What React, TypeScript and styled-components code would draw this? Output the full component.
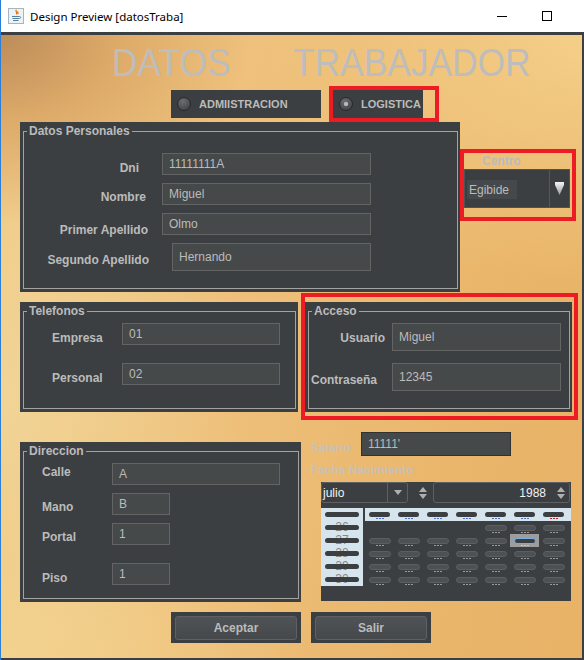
import React from "react";
import styled, { createGlobalStyle } from "styled-components";

const GlobalStyle = createGlobalStyle`
  *, *::before, *::after { box-sizing: border-box; }
  html, body { margin: 0; padding: 0; background: #ffffff; }
  body { font-family: "Liberation Sans", Arial, sans-serif; }
`;

const Window = styled.div`
  width: 584px;
  height: 660px;
  display: flex;
  flex-direction: column;
  border-left: 1px solid #2b7fd6;
  background: #ffffff;
  overflow: hidden;
`;

const TitleBar = styled.div`
  height: 32px;
  flex: none;
  display: flex;
  align-items: center;
  padding: 0 15px 0 7px;
  background: #ffffff;
`;

const TitleText = styled.span`
  margin-left: 6px;
  font-family: "Noto Sans", "Liberation Sans", sans-serif;
  font-size: 11.5px;
  color: #000000;
`;

const Controls = styled.div`
  margin-left: auto;
  display: flex;
`;

const ControlButton = styled.div`
  width: 45px;
  height: 32px;
  display: flex;
  align-items: center;
  justify-content: center;
`;

const MinGlyph = styled.span`
  width: 10px;
  height: 1px;
  background: #000000;
`;

const MaxGlyph = styled.span`
  width: 10px;
  height: 10px;
  border: 1px solid #000000;
`;

const Frame = styled.div`
  flex: 1;
  display: flex;
  padding: 3px 2px 2px 0;
  background: #3c3f41;
`;

const Content = styled.div`
  flex: 1;
  display: flex;
  flex-direction: column;
  background:
    radial-gradient(ellipse 250px 190px at 0px 0px, rgba(188, 140, 90, 1) 0%, rgba(215, 160, 96, 0.75) 45%, rgba(228, 172, 98, 0) 100%),
    radial-gradient(ellipse 320px 250px at 100% 0%, rgba(245, 208, 138, 0.95) 0%, rgba(245, 208, 138, 0) 100%),
    radial-gradient(ellipse 240px 380px at 0% 58%, rgba(241, 213, 152, 0.95) 0%, rgba(241, 213, 152, 0) 100%),
    radial-gradient(ellipse 300px 140px at 0% 100%, rgba(243, 210, 140, 0.9) 0%, rgba(243, 210, 140, 0) 100%),
    linear-gradient(100deg, #f0c782 0%, #eec07b 40%, #e9b56a 80%, #e8b367 100%);
`;

const TitleRow = styled.div`
  flex: none;
  display: flex;
  height: 39px;
  margin-top: 8px;
  padding-left: 111px;
`;

const TitleWord = styled.span<{ $ml?: number }>`
  display: inline-block;
  font-size: 39px;
  line-height: 39px;
  color: #bdbdbd;
  white-space: nowrap;
  transform: scaleX(0.906);
  transform-origin: 0 50%;
  margin-left: ${(p) => p.$ml ?? 0}px;
`;

const Band = styled.div<{ $mt?: number; $h: number }>`
  flex: none;
  display: flex;
  align-items: flex-start;
  height: ${(p) => p.$h}px;
  margin-top: ${(p) => p.$mt ?? 0}px;
`;

const Marker = styled.div<{ $w: number; $h: number; $ml?: number; $mt?: number }>`
  flex: none;
  display: flex;
  flex-direction: column;
  align-items: flex-start;
  width: ${(p) => p.$w}px;
  height: ${(p) => p.$h}px;
  margin-left: ${(p) => p.$ml ?? 0}px;
  margin-top: ${(p) => p.$mt ?? 0}px;
  border: 4px solid #ed1c24;
`;

const RadioBox = styled.label<{ $w: number; $ml?: number; $mt?: number }>`
  flex: none;
  display: flex;
  align-items: center;
  gap: 8px;
  width: ${(p) => p.$w}px;
  height: 28px;
  margin-left: ${(p) => p.$ml ?? 0}px;
  margin-top: ${(p) => p.$mt ?? 0}px;
  padding-left: 6px;
  background: #3c3f41;
  font-size: 11px;
  font-weight: bold;
  color: #bbbbbb;
  white-space: nowrap;
`;

const RadioDot = styled.span<{ $checked?: boolean }>`
  flex: none;
  width: 14px;
  height: 14px;
  border-radius: 50%;
  border: 1px solid #26282a;
  background: ${(p) =>
    p.$checked
      ? "radial-gradient(circle, #b8b8b8 0 1.8px, rgba(0,0,0,0) 2.4px), radial-gradient(circle at 40% 30%, #6a6e71 0%, #3a3d3f 100%)"
      : "radial-gradient(circle at 40% 30%, #6a6e71 0%, #3a3d3f 100%)"};
`;

const Panel = styled.div<{ $w: number; $h: number; $ml?: number; $mt?: number }>`
  flex: none;
  display: flex;
  width: ${(p) => p.$w}px;
  height: ${(p) => p.$h}px;
  margin-left: ${(p) => p.$ml ?? 0}px;
  margin-top: ${(p) => p.$mt ?? 0}px;
  padding: 2px 2px 3px 3px;
  background: #3c3f41;
`;

const Group = styled.fieldset`
  flex: 1;
  min-width: 0;
  margin: 0;
  padding: 0;
  border: 1px solid #a3a3a3;
`;

const Legend = styled.legend`
  margin-left: 3px;
  padding: 0 2px;
  font-size: 12px;
  line-height: 14px;
  font-weight: bold;
  color: #bbbbbb;
`;

const Field = styled.div<{ $mt: number; $h: number }>`
  display: flex;
  align-items: flex-start;
  height: ${(p) => p.$h}px;
  margin-top: ${(p) => p.$mt}px;
`;

const FieldLabel = styled.label<{ $w: number; $dy: number; $ml?: number; $right?: boolean; $onBg?: boolean }>`
  flex: none;
  width: ${(p) => p.$w}px;
  margin-top: ${(p) => p.$dy}px;
  margin-left: ${(p) => p.$ml ?? 0}px;
  text-align: ${(p) => (p.$right ? "right" : "left")};
  font-size: 12px;
  line-height: 14px;
  font-weight: bold;
  color: ${(p) => (p.$onBg ? "#c9c0b6" : "#bbbbbb")};
  white-space: nowrap;
`;

const TextBox = styled.input<{ $w: number; $ml?: number; $dark?: boolean }>`
  flex: none;
  width: ${(p) => p.$w}px;
  height: 100%;
  margin: 0 0 0 ${(p) => p.$ml ?? 0}px;
  padding: 0 6px;
  border: 1px solid ${(p) => (p.$dark ? "#2f3133" : "#646464")};
  background: #45494a;
  color: #bbbbbb;
  font-family: "Liberation Sans", Arial, sans-serif;
  font-size: 12px;
  outline: none;
`;

const CentroLabel = styled.span`
  margin: 1px 0 0 18px;
  font-size: 12px;
  line-height: 14px;
  font-weight: bold;
  color: #b9bcc0;
`;

const Combo = styled.div`
  display: flex;
  align-items: center;
  width: 106px;
  height: 39px;
  margin-top: 1px;
  background: #3c3f41;
  border: 1px solid #505356;
`;

const ComboValue = styled.span`
  display: flex;
  align-items: center;
  width: 50px;
  height: 19px;
  margin: 2px 0 0 2px;
  padding-left: 2px;
  background: #46494b;
  font-size: 12px;
  color: #bbbbbb;
`;

const ComboButton = styled.span`
  display: flex;
  align-items: center;
  justify-content: center;
  width: 20px;
  height: 100%;
  margin-left: auto;
  border-left: 1px solid #55585b;
`;

const SideColumn = styled.div`
  flex: none;
  display: flex;
  flex-direction: column;
  margin: 12px 0 0 10px;
`;

const OuterLabel = styled.span<{ $mt?: number }>`
  margin-top: ${(p) => p.$mt ?? 0}px;
  font-size: 12px;
  line-height: 14px;
  font-weight: bold;
  color: #c9c0b6;
  white-space: nowrap;
`;

const Calendar = styled.div`
  flex: none;
  display: flex;
  flex-direction: column;
  width: 250px;
  height: 119px;
  margin: 5px 0 0 10px;
  background: #3c3f41;
`;

const CalTop = styled.div`
  display: flex;
  align-items: stretch;
  height: 21px;
`;

const MonthCombo = styled.div`
  flex: none;
  display: flex;
  width: 87px;
  border: 1px solid #5e6163;
  border-radius: 3px;
`;

const MonthText = styled.span`
  flex: 1;
  display: flex;
  align-items: center;
  padding-left: 1px;
  font-size: 12px;
  color: #f2f2f2;
`;

const MonthArrow = styled.span`
  flex: none;
  display: flex;
  align-items: center;
  justify-content: center;
  width: 20px;
  border-left: 1px solid #5e6163;
`;

const Spinner = styled.span<{ $ml: number }>`
  flex: none;
  display: flex;
  flex-direction: column;
  align-items: center;
  justify-content: center;
  gap: 2px;
  width: 9px;
  margin-left: ${(p) => p.$ml}px;
`;

const YearField = styled.div`
  flex: none;
  display: flex;
  align-items: center;
  justify-content: flex-end;
  width: 137px;
  margin-left: 6px;
  padding-right: 4px;
  border: 1px solid #5e6163;
  border-radius: 3px;
`;

const YearText = styled.span`
  font-size: 12px;
  color: #f2f2f2;
`;

const CalBody = styled.div`
  display: flex;
  align-items: flex-start;
  margin-top: 5px;
`;

const WeekColumn = styled.div`
  flex: none;
  display: flex;
  flex-direction: column;
  width: 42px;
  background: #d6e4ee;
`;

const WeekCell = styled.div`
  position: relative;
  height: 13px;
  text-align: center;
  font-size: 12px;
  line-height: 13px;
  color: #8d877d;
`;

const WeekPill = styled.span`
  position: absolute;
  left: 4px;
  top: 4px;
  width: 34px;
  height: 5px;
  border-radius: 3px;
  background: #3c3f41;
`;

const DayArea = styled.div`
  flex: none;
  display: flex;
  flex-direction: column;
  width: 206px;
  margin-left: 2px;
`;

const DayGrid = styled.div<{ $header?: boolean }>`
  display: grid;
  grid-template-columns: repeat(7, 29px);
  grid-auto-rows: 13px;
  background: ${(p) => (p.$header ? "#d6e4ee" : "transparent")};
`;

const DayCell = styled.div<{ $selected?: boolean }>`
  display: flex;
  flex-direction: column;
  align-items: flex-start;
  padding: 4px 0 0 4px;
  background: ${(p) => (p.$selected ? "#9d9d9d" : "transparent")};
`;

const Pill = styled.span<{ $kind: "head" | "day" | "sel" }>`
  width: ${(p) => (p.$kind === "head" ? 21 : 22)}px;
  height: ${(p) => (p.$kind === "head" ? 5 : 6)}px;
  border-radius: 3px;
  background: ${(p) => (p.$kind === "day" ? "#4e5153" : "#3c3f41")};
  border: ${(p) =>
    p.$kind === "day" ? "1px solid #5c5f62" : p.$kind === "sel" ? "1px solid #7aaee2" : "none"};
`;

const Dots = styled.span<{ $color: string }>`
  width: 8px;
  height: 1px;
  margin: 1px 0 0 7px;
  background: repeating-linear-gradient(90deg, ${(p) => p.$color} 0 2px, transparent 2px 3px);
`;

const ButtonFrame = styled.div<{ $w: number; $ml: number }>`
  flex: none;
  display: flex;
  width: ${(p) => p.$w}px;
  height: 31px;
  margin-left: ${(p) => p.$ml}px;
  padding: 4px 4px 3px 4px;
  background: #3c3f41;
`;

const Button = styled.button`
  flex: 1;
  padding: 0;
  border: 1px solid #5e6163;
  border-radius: 3px;
  background: linear-gradient(#4f5355, #46494b);
  color: #bbbbbb;
  font-family: "Liberation Sans", Arial, sans-serif;
  font-size: 12px;
  font-weight: bold;
`;

const JavaIcon = () => (
  <svg width="16" height="16" viewBox="0 0 16 16">
    <rect x="0.5" y="0.5" width="15" height="15" fill="#eef2f6" stroke="#a8b4c0" />
    <path d="M8.5 1.8c-2 1.6 1.6 2.4-0.2 4.6M10 3.4c-1 0.9 0.8 1.3-0.2 2.6" stroke="#e76f00" strokeWidth="1.2" fill="none" />
    <path d="M4 8.5h7.5M4.5 10.5h6.5M5 12.5h5.5" stroke="#5382a1" strokeWidth="1.1" fill="none" />
    <path d="M11.5 8.5c1.6 0 1.6 2-0.3 2" stroke="#5382a1" strokeWidth="1" fill="none" />
  </svg>
);

const SmallArrow = ({ up = false, color = "#b0b0b0" }: { up?: boolean; color?: string }) => (
  <svg width="8" height="5" viewBox="0 0 8 5">
    <polygon points={up ? "0,5 8,5 4,0" : "0,0 8,0 4,5"} fill={color} />
  </svg>
);

const BigArrow = () => (
  <svg width="9" height="13" viewBox="0 0 9 13">
    <defs>
      <linearGradient id="ga" x1="0" y1="0" x2="0" y2="1">
        <stop offset="0" stopColor="#f4f4f4" />
        <stop offset="1" stopColor="#9a9a9a" />
      </linearGradient>
    </defs>
    <polygon points="0,0 9,0 9,3 4.5,13 0,3" fill="url(#ga)" />
  </svg>
);

const days: { row: number; col: number }[] = [];
for (let r = 0; r < 5; r++) {
  for (let c = 0; c < 7; c++) {
    if (r === 0 && c < 4) continue;
    days.push({ row: r, col: c });
  }
}

export default function App() {
  return (
    <>
      <GlobalStyle />
      <Window>
        <TitleBar>
          <JavaIcon />
          <TitleText>Design Preview [datosTraba]</TitleText>
          <Controls>
            <ControlButton>
              <MinGlyph />
            </ControlButton>
            <ControlButton>
              <MaxGlyph />
            </ControlButton>
          </Controls>
        </TitleBar>
        <Frame>
          <Content>
            <TitleRow>
              <TitleWord>DATOS</TitleWord>
              <TitleWord $ml={50}>TRABAJADOR</TitleWord>
            </TitleRow>

            <Band $mt={4} $h={36}>
              <RadioBox $w={150} $ml={170} $mt={4}>
                <RadioDot />
                ADMIISTRACION
              </RadioBox>
              <Marker $w={110} $h={36} $ml={8}>
                <RadioBox $w={90}>
                  <RadioDot $checked />
                  LOGISTICA
                </RadioBox>
              </Marker>
            </Band>

            <Band $h={170}>
              <Panel $w={440} $h={170} $ml={19}>
                <Group>
                  <Legend>Datos Personales</Legend>
                  <Field $mt={15} $h={22}>
                    <FieldLabel $w={115} $dy={8} $right>Dni</FieldLabel>
                    <TextBox $w={209} $ml={23} readOnly value="11111111A" />
                  </Field>
                  <Field $mt={8} $h={22}>
                    <FieldLabel $w={122} $dy={7} $right>Nombre</FieldLabel>
                    <TextBox $w={209} $ml={16} readOnly value="Miguel" />
                  </Field>
                  <Field $mt={8} $h={22}>
                    <FieldLabel $w={124} $dy={10} $right>Primer Apellido</FieldLabel>
                    <TextBox $w={209} $ml={14} readOnly value="Olmo" />
                  </Field>
                  <Field $mt={8} $h={28}>
                    <FieldLabel $w={125} $dy={10} $right>Segundo Apellido</FieldLabel>
                    <TextBox $w={199} $ml={23} readOnly value="Hernando" />
                  </Field>
                </Group>
              </Panel>
              <Marker $w={116} $h={72} $mt={27}>
                <CentroLabel>Centro</CentroLabel>
                <Combo>
                  <ComboValue>Egibide</ComboValue>
                  <ComboButton>
                    <BigArrow />
                  </ComboButton>
                </Combo>
              </Marker>
            </Band>

            <Band $h={128}>
              <Panel $w={278} $h={110} $ml={19} $mt={10}>
                <Group>
                  <Legend>Telefonos</Legend>
                  <Field $mt={5} $h={22}>
                    <FieldLabel $w={70} $ml={28} $dy={8}>Empresa</FieldLabel>
                    <TextBox $w={158} readOnly value="01" />
                  </Field>
                  <Field $mt={18} $h={22}>
                    <FieldLabel $w={70} $ml={28} $dy={8}>Personal</FieldLabel>
                    <TextBox $w={158} readOnly value="02" />
                  </Field>
                </Group>
              </Panel>
              <Marker $w={277} $h={127} $ml={3} $mt={1}>
                <Panel $w={267} $h={110} $mt={5}>
                  <Group>
                    <Legend>Acceso</Legend>
                    <Field $mt={5} $h={28}>
                      <FieldLabel $w={76} $dy={8} $right>Usuario</FieldLabel>
                      <TextBox $w={169} $ml={7} readOnly value="Miguel" />
                    </Field>
                    <Field $mt={12} $h={28}>
                      <FieldLabel $w={74} $ml={2} $dy={10}>Contraseña</FieldLabel>
                      <TextBox $w={169} $ml={7} readOnly value="12345" />
                    </Field>
                  </Group>
                </Panel>
              </Marker>
            </Band>

            <Band $h={182}>
              <Panel $w={281} $h={160} $ml={19} $mt={22}>
                <Group>
                  <Legend>Direccion</Legend>
                  <Field $mt={5} $h={22}>
                    <FieldLabel $w={70} $ml={18} $dy={2}>Calle</FieldLabel>
                    <TextBox $w={168} readOnly value="A" />
                  </Field>
                  <Field $mt={8} $h={22}>
                    <FieldLabel $w={70} $ml={18} $dy={7}>Mano</FieldLabel>
                    <TextBox $w={58} readOnly value="B" />
                  </Field>
                  <Field $mt={8} $h={22}>
                    <FieldLabel $w={70} $ml={18} $dy={7}>Portal</FieldLabel>
                    <TextBox $w={58} readOnly value="1" />
                  </Field>
                  <Field $mt={18} $h={22}>
                    <FieldLabel $w={70} $ml={18} $dy={8}>Piso</FieldLabel>
                    <TextBox $w={58} readOnly value="1" />
                  </Field>
                </Group>
              </Panel>

              <SideColumn>
                <Field $mt={0} $h={24}>
                  <FieldLabel $w={50} $dy={9} $onBg>Salario</FieldLabel>
                  <TextBox $w={150} $dark readOnly value="11111'" />
                </Field>
                <OuterLabel $mt={7}>Fecha Nacimiento</OuterLabel>
                <Calendar>
                  <CalTop>
                    <MonthCombo>
                      <MonthText>julio</MonthText>
                      <MonthArrow>
                        <SmallArrow />
                      </MonthArrow>
                    </MonthCombo>
                    <Spinner $ml={10}>
                      <SmallArrow up />
                      <SmallArrow />
                    </Spinner>
                    <YearField>
                      <YearText>1988</YearText>
                      <Spinner $ml={10}>
                        <SmallArrow up />
                        <SmallArrow />
                      </Spinner>
                    </YearField>
                  </CalTop>
                  <CalBody>
                    <WeekColumn>
                      {["", "26", "27", "28", "29", "30"].map((w, i) => (
                        <WeekCell key={i}>
                          {w}
                          <WeekPill />
                        </WeekCell>
                      ))}
                    </WeekColumn>
                    <DayArea>
                      <DayGrid $header>
                        {Array.from({ length: 7 }).map((_, i) => (
                          <DayCell key={i}>
                            <Pill $kind="head" />
                            <Dots $color={i === 6 ? "#b02a2a" : "#4b74c8"} />
                          </DayCell>
                        ))}
                      </DayGrid>
                      <DayGrid>
                        {days.map((d) => {
                          const sel = d.row === 1 && d.col === 5;
                          return (
                            <DayCell
                              key={`${d.row}-${d.col}`}
                              $selected={sel}
                              style={{ gridRow: d.row + 1, gridColumn: d.col + 1 }}
                            >
                              <Pill $kind={sel ? "sel" : "day"} />
                              <Dots $color={sel ? "#c8c8c8" : "#9a9a9a"} />
                            </DayCell>
                          );
                        })}
                      </DayGrid>
                    </DayArea>
                  </CalBody>
                </Calendar>
              </SideColumn>
            </Band>

            <Band $mt={10} $h={31}>
              <ButtonFrame $w={130} $ml={170}>
                <Button>Aceptar</Button>
              </ButtonFrame>
              <ButtonFrame $w={120} $ml={10}>
                <Button>Salir</Button>
              </ButtonFrame>
            </Band>
          </Content>
        </Frame>
      </Window>
    </>
  );
}
